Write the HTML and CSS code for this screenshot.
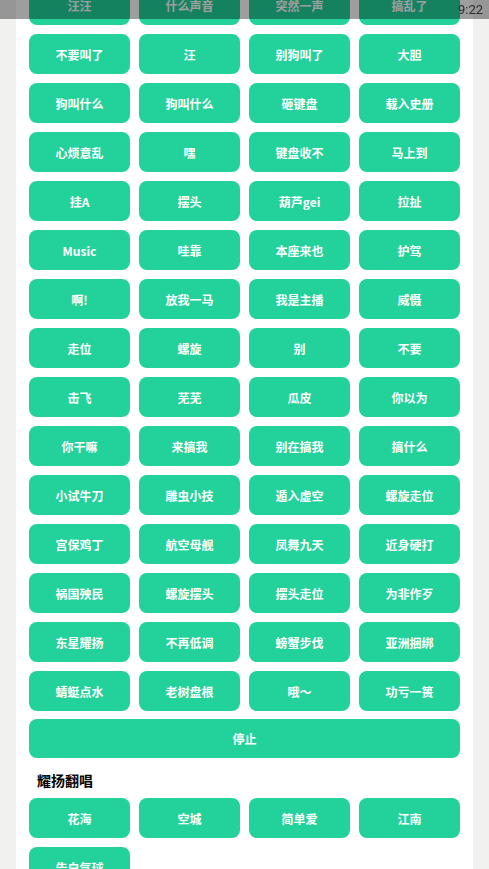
FILE: index.html
```html
<!DOCTYPE html>
<html lang="zh">
<head>
    <meta charset="UTF-8">
    <meta name="viewport" content="width=device-width, initial-scale=1.0">
    <title>耀扬语音盒</title>
    <link rel="stylesheet" href="styles.css">
</head>
<body>
    <div class="status-bar">
        <span class="time">9:22</span>
    </div>

    <div class="panel">
        <div class="sound-grid">
            <button class="sound-btn">汪汪</button>
            <button class="sound-btn">什么声音</button>
            <button class="sound-btn">突然一声</button>
            <button class="sound-btn">搞乱了</button>
            <button class="sound-btn">不要叫了</button>
            <button class="sound-btn">汪</button>
            <button class="sound-btn">别狗叫了</button>
            <button class="sound-btn">大胆</button>
            <button class="sound-btn">狗叫什么</button>
            <button class="sound-btn">狗叫什么</button>
            <button class="sound-btn">砸键盘</button>
            <button class="sound-btn">载入史册</button>
            <button class="sound-btn">心烦意乱</button>
            <button class="sound-btn">嘿</button>
            <button class="sound-btn">键盘收不</button>
            <button class="sound-btn">马上到</button>
            <button class="sound-btn">挂A</button>
            <button class="sound-btn">摆头</button>
            <button class="sound-btn">葫芦gei</button>
            <button class="sound-btn">拉扯</button>
            <button class="sound-btn">Music</button>
            <button class="sound-btn">哇靠</button>
            <button class="sound-btn">本座来也</button>
            <button class="sound-btn">护驾</button>
            <button class="sound-btn">啊!</button>
            <button class="sound-btn">放我一马</button>
            <button class="sound-btn">我是主播</button>
            <button class="sound-btn">威慑</button>
            <button class="sound-btn">走位</button>
            <button class="sound-btn">螺旋</button>
            <button class="sound-btn">别</button>
            <button class="sound-btn">不要</button>
            <button class="sound-btn">击飞</button>
            <button class="sound-btn">芜芜</button>
            <button class="sound-btn">瓜皮</button>
            <button class="sound-btn">你以为</button>
            <button class="sound-btn">你干嘛</button>
            <button class="sound-btn">来搞我</button>
            <button class="sound-btn">别在搞我</button>
            <button class="sound-btn">搞什么</button>
            <button class="sound-btn">小试牛刀</button>
            <button class="sound-btn">雕虫小技</button>
            <button class="sound-btn">遁入虚空</button>
            <button class="sound-btn">螺旋走位</button>
            <button class="sound-btn">宫保鸡丁</button>
            <button class="sound-btn">航空母舰</button>
            <button class="sound-btn">凤舞九天</button>
            <button class="sound-btn">近身硬打</button>
            <button class="sound-btn">祸国殃民</button>
            <button class="sound-btn">螺旋摆头</button>
            <button class="sound-btn">摆头走位</button>
            <button class="sound-btn">为非作歹</button>
            <button class="sound-btn">东星耀扬</button>
            <button class="sound-btn">不再低调</button>
            <button class="sound-btn">螃蟹步伐</button>
            <button class="sound-btn">亚洲捆绑</button>
            <button class="sound-btn">蜻蜓点水</button>
            <button class="sound-btn">老树盘根</button>
            <button class="sound-btn">哦～</button>
            <button class="sound-btn">功亏一篑</button>
            <button class="sound-btn stop-btn">停止</button>
        </div>

        <h2 class="section-title">耀扬翻唱</h2>

        <div class="sound-grid">
            <button class="sound-btn">花海</button>
            <button class="sound-btn">空城</button>
            <button class="sound-btn">简单爱</button>
            <button class="sound-btn">江南</button>
            <button class="sound-btn">告白气球</button>
        </div>
    </div>
</body>
</html>
```

FILE: styles.css
```css
* {
    margin: 0;
    padding: 0;
    box-sizing: border-box;
    font-family: 'Noto Sans CJK SC', 'Noto Sans', sans-serif;
}

body {
    background-color: #f1f2f0;
    color: #000;
}

.status-bar {
    position: fixed;
    top: 0;
    left: 0;
    width: 100%;
    height: 19px;
    display: flex;
    justify-content: flex-end;
    align-items: center;
    padding-right: 6px;
    background-color: rgba(0, 0, 0, 0.38);
    z-index: 10;
}

.time {
    font-family: 'Roboto', sans-serif;
    font-size: 13px;
    color: #2b2b2b;
}

/* page is scrolled a little, first row sits under the status bar */
.panel {
    margin: -15px 16px 0;
    padding: 0 13px 20px;
    background-color: #fff;
}

.sound-grid {
    display: grid;
    grid-template-columns: repeat(4, 1fr);
    gap: 9px;
}

.sound-btn {
    height: 40px;
    border: none;
    border-radius: 8px;
    background-color: #23d29a;
    color: #fff;
    font-size: 12px;
    font-weight: bold;
    cursor: pointer;
}

.stop-btn {
    grid-column: 1 / -1;
    height: 39px;
    margin-top: -1px;
}

.section-title {
    padding: 12px 8px 8px;
    font-size: 14px;
    line-height: 20px;
    font-weight: bold;
}
```
